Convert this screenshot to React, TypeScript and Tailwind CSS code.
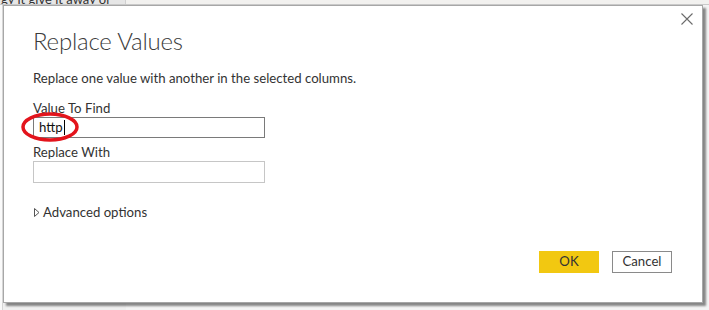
import React from "react";

export default function App() {
  const font = { fontFamily: 'Lato, "Noto Sans", sans-serif' };
  return (
    <div className="relative w-[709px] h-[310px] overflow-hidden bg-[#f3f2f1]" style={font}>
      {/* background app */}
      <div className="flex h-[5px] border-b border-[#c9c9c9]">
        <div className="w-[126px] bg-[#e6e6e6] border-r border-[#d0d0d0] overflow-hidden">
          <div className="-mt-[8px] pl-[1px] text-[13px] leading-[14px] text-[#333] whitespace-nowrap">gy it give it away or</div>
        </div>
        <div className="flex-1 bg-[#f2f1ef]" />
      </div>
      <div className="flex h-[305px]">
        <div className="w-[126px] bg-[#f0f0f0] flex flex-col">
          <div className="flex-1 w-[3px] border-r border-[#d6d6d6] bg-[#fafafa]" />
        </div>
        <div className="flex-1 bg-[#f4f4f4]" />
      </div>

      {/* dialog */}
      <div className="absolute left-[3px] top-[5px] w-[700px] h-[298px] bg-white border border-[#a7a7a7] shadow-[3px_3px_2px_rgba(0,0,0,0.45)]">
        <button className="absolute right-[8px] top-[6px] w-[14px] h-[14px] flex items-center justify-center">
          <svg width="12" height="12" viewBox="0 0 12 12">
            <path d="M0.5 0.5 L11.5 11.5 M11.5 0.5 L0.5 11.5" stroke="#6b6b6b" strokeWidth="1.1" />
          </svg>
        </button>
        <div className="pl-[29px] pt-[19px] flex flex-col">
          <div className="text-[24px] leading-[32px] font-light text-[#3b3b3b] tracking-[-0.2px]">Replace Values</div>
          <div className="mt-[13px] text-[13.2px] leading-[16px] text-[#333]">Replace one value with another in the selected columns.</div>
          <div className="mt-[14px] text-[13.2px] leading-[16px] text-[#333]">Value To Find</div>
          <div className="relative mt-[1px] w-[232px] h-[21px] border border-[#7a7a7a] flex items-center pl-[5px] text-[13.2px] text-[#111]">
            <span>http</span>
            <span className="w-[1px] h-[15px] bg-black ml-[1px]" />
            <svg className="absolute left-[-14px] top-[-8px]" width="62" height="34" viewBox="0 0 62 34">
              <ellipse cx="30" cy="17" rx="27" ry="13" fill="none" stroke="#e3141c" strokeWidth="3.5" />
            </svg>
          </div>
          <div className="mt-[6px] text-[13.2px] leading-[16px] text-[#333]">Replace With</div>
          <div className="mt-[1px] w-[232px] h-[22px] border border-[#c6c6c6]" />
          <div className="mt-[21px] flex items-center gap-[3px] text-[13.2px] leading-[16px] text-[#333]">
            <svg width="6" height="9" viewBox="0 0 6 9" className="ml-[1px]">
              <path d="M0.5 0.5 L5 4.5 L0.5 8.5 Z" fill="none" stroke="#555" strokeWidth="1" />
            </svg>
            <span>Advanced options</span>
          </div>
        </div>
        <div className="absolute right-[30px] bottom-[29px] flex gap-[13px]">
          <button className="w-[60px] h-[22px] bg-[#f2c811] text-[13.2px] text-[#333]">OK</button>
          <button className="w-[60px] h-[22px] bg-white border border-[#8a8a8a] text-[13.2px] text-[#333]">Cancel</button>
        </div>
      </div>
    </div>
  );
}
